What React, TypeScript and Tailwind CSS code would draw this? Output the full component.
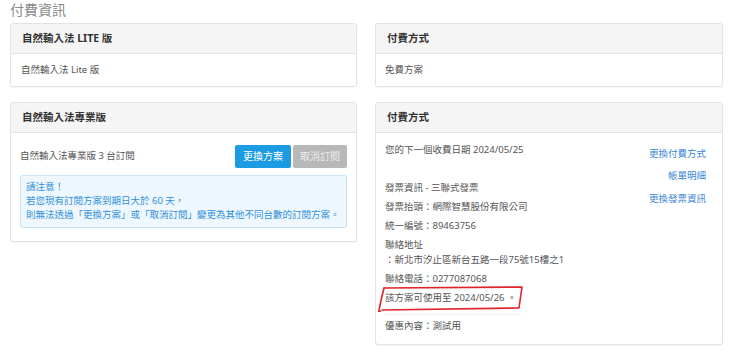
import React from "react";

const font = { fontFamily: '"Noto Sans", "Noto Sans CJK TC", sans-serif' };

function Header({ children }: { children: React.ReactNode }) {
  return (
    <div className="h-[30px] bg-[#f5f5f5] border-b border-[#e3e3e3] px-[11px] flex items-center font-bold text-[10.5px] text-[#333] rounded-t-[3px]">
      {children}
    </div>
  );
}

export default function App() {
  return (
    <div className="w-[740px] h-[363px] bg-white pl-[10px] relative overflow-hidden" style={font}>
      <div className="h-[23px] text-[14px] leading-[20px] text-[#8a8a8a]">付費資訊</div>
      <div className="flex gap-[18px] items-start">
        <div className="w-[347px] flex flex-col gap-[15px]">
          <div className="border border-[#e3e3e3] rounded-[3px] bg-white shadow-[0_1px_1px_rgba(0,0,0,0.04)]">
            <Header>自然輸入法 LITE 版</Header>
            <div className="h-[32px] flex items-center px-[10px] text-[9.5px] text-[#555]">自然輸入法 Lite 版</div>
          </div>
          <div className="border border-[#e3e3e3] rounded-[3px] bg-white shadow-[0_1px_1px_rgba(0,0,0,0.04)]">
            <Header>自然輸入法專業版</Header>
            <div className="px-[9px] pt-[12px] pb-[13px]">
              <div className="flex items-center justify-between h-[23px]">
                <span className="text-[9.5px] text-[#555]">自然輸入法專業版 3 台訂閱</span>
                <div className="flex gap-[2px]">
                  <div className="w-[56px] h-[23px] bg-[#1a9be2] rounded-[2px] flex items-center justify-center text-white text-[10px]">更換方案</div>
                  <div className="w-[54px] h-[23px] bg-[#b8b8b8] rounded-[2px] flex items-center justify-center text-[#ececec] text-[10px]">取消訂閱</div>
                </div>
              </div>
              <div className="mt-[7px] h-[53px] border border-[#c6e2f4] bg-[#eef7fd] rounded-[3px] px-[5px] pt-[4px] text-[9.5px] leading-[14px] text-[#2f8fdc]">
                <div>請注意！</div>
                <div>若您現有訂閱方案到期日大於 60 天，</div>
                <div>則無法透過「更換方案」或「取消訂閱」變更為其他不同台數的訂閱方案。</div>
              </div>
            </div>
          </div>
        </div>
        <div className="w-[348px] flex flex-col gap-[15px]">
          <div className="border border-[#e3e3e3] rounded-[3px] bg-white shadow-[0_1px_1px_rgba(0,0,0,0.04)]">
            <Header>付費方式</Header>
            <div className="h-[32px] flex items-center px-[9px] text-[9.5px] text-[#555]">免費方案</div>
          </div>
          <div className="border border-[#e3e3e3] rounded-[3px] bg-white shadow-[0_1px_1px_rgba(0,0,0,0.04)]">
            <Header>付費方式</Header>
            <div className="flex justify-between pl-[9px] pr-[16px] pt-[9px] pb-[11px] text-[9.5px] leading-[15px] text-[#555]">
              <div className="flex flex-col">
                <div className="mb-[23px]">您的下一個收費日期 2024/05/25</div>
                <div className="mb-[4px]">發票資訊 - 三聯式發票</div>
                <div className="mb-[4px]">發票抬頭：網際智慧股份有限公司</div>
                <div className="mb-[4px]">統一編號：89463756</div>
                <div className="mb-[4px]">聯絡地址<br />：新北市汐止區新台五路一段75號15樓之1</div>
                <div className="mb-[4px]">聯絡電話：0277087068</div>
                <div>該方案可使用至 2024/05/26 。</div>
                <div className="mt-[9px] mb-[3px] w-[137px] border-t border-[#f0f0f0]"></div>
                <div>優惠內容：測試用</div>
              </div>
              <div className="flex flex-col items-end pt-[4px] text-[#3a86d6]">
                <div className="mb-[7px]">更換付費方式</div>
                <div className="mb-[8px]">帳單明細</div>
                <div>更換發票資訊</div>
              </div>
            </div>
          </div>
        </div>
      </div>
      <svg className="absolute left-[370px] top-[280px]" width="160" height="40" viewBox="0 0 160 40" fill="none">
        <path d="M14 8 L152 7 L149 28 L12 30" stroke="#e0242b" strokeWidth="1.6" strokeLinejoin="round" strokeLinecap="round" />
        <path d="M14 8 Q11 20 9 30 Q8 32 10.5 31" stroke="#e0242b" strokeWidth="1.6" strokeLinecap="round" />
      </svg>
    </div>
  );
}
